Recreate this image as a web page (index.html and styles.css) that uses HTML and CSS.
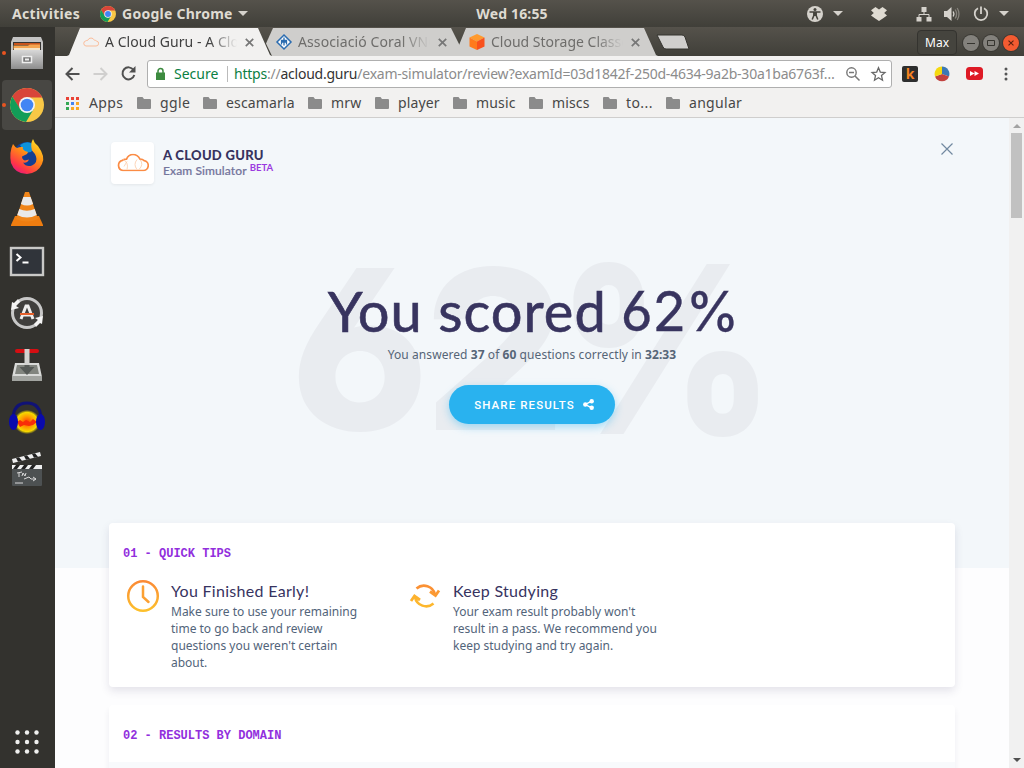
FILE: index.html
```
<!DOCTYPE html>
<html lang="en">
<head>
<meta charset="utf-8">
<title>A Cloud Guru - Exam Simulator</title>
<link rel="stylesheet" href="styles.css">
</head>
<body>
<svg class="defs" width="0" height="0">
  <defs>
    <linearGradient id="amber" x1="0" y1="0" x2="0" y2="1"><stop offset="0" stop-color="#fb8a35"/><stop offset="1" stop-color="#fdc02c"/></linearGradient>
    <linearGradient id="silver" x1="0" y1="0" x2="0" y2="1"><stop offset="0" stop-color="#d8d8d8"/><stop offset="1" stop-color="#8d8d8d"/></linearGradient>
    <linearGradient id="fox" x1="0.8" y1="0" x2="0.2" y2="1"><stop offset="0" stop-color="#ffe226"/><stop offset=".45" stop-color="#ff8a16"/><stop offset=".8" stop-color="#ff3647"/><stop offset="1" stop-color="#e31587"/></linearGradient>
    <radialGradient id="flame"><stop offset="0" stop-color="#ff3b00"/><stop offset=".45" stop-color="#ff9a00"/><stop offset=".8" stop-color="#f5d800"/><stop offset="1" stop-color="#d8c000" stop-opacity=".1"/></radialGradient>
    <symbol id="chrome" viewBox="0 0 34 34">
      <circle cx="17" cy="17" r="17" fill="#f9c846"/>
      <path d="M2.3 8.5A17 17 0 0 1 31.7 8.5L32 9.5H17L9.7 21Z" fill="#d8453a"/>
      <path d="M2.3 8.5A17 17 0 0 0 16 34L24 20.500 17 24.600 10 20.700Z" fill="#129d58"/>
      <circle cx="17" cy="17" r="8" fill="#f3f3f3"/><circle cx="17" cy="17" r="6.300" fill="#4285f4"/>
    </symbol>
    <symbol id="folder" viewBox="0 0 14 12"><path d="M1 0h4.500l1.500 2H13a1 1 0 0 1 1 1v8a1 1 0 0 1-1 1H1a1 1 0 0 1-1-1V1a1 1 0 0 1 1-1z" fill="#8b8b8b"/></symbol>
    <symbol id="cross" viewBox="0 0 8 8"><path d="M.7.7l6.600 6.600M7.300.7L.7 7.300" stroke="currentColor" stroke-width="1.500" fill="none"/></symbol>
    <symbol id="cloud" viewBox="0 0 32 18"><path d="M6 17h20a5 5 0 0 0 1.200-9.900Q25.500 5.500 23 5.600 20.500 1 16 1T9.500 5.600Q7.500 5.500 5.500 6.800A5.200 5.200 0 0 0 6 17z" fill="none" stroke="currentColor" stroke-width="1.700"/></symbol>
  </defs>
</svg>

<header class="topbar">
  <div class="topbar-left"><b class="activities">Activities</b><svg width="16" height="16"><use href="#chrome"/></svg><b class="app-name">Google Chrome</b><i class="caret"></i></div>
  <b class="clock">Wed 16:55</b>
  <div class="topbar-right">
    <svg width="16" height="16" viewBox="0 0 16 16"><circle cx="8" cy="8" r="8" fill="#d5d2cc"/><circle cx="8" cy="3.400" r="1.500" fill="#45433c"/><path d="M2.500 6h11M8 6v4M6.800 6.500v3L5.200 13.500M9.200 6.500v3l1.600 4" stroke="#45433c" stroke-width="1.500" fill="none"/></svg>
    <i class="caret caret-access"></i>
    <svg class="dropbox" width="16" height="14" viewBox="0 0 16 14"><path d="M4.500 0L8 2.500 11.500 0 16 3.200 13.200 6 16 8.600 12.500 11 8 14 3.500 11 0 8.600 2.800 6 0 3.200z" fill="#dfdbd2"/></svg>
    <svg class="network" width="16" height="16" viewBox="0 0 16 16"><path d="M5.500 1h5v5h-5zM.5 11h5v4.500h-5zM10.500 11h5v4.500h-5z" fill="#d5d2cc"/><path d="M8 5v3.500M3 12V8.500h10V12" stroke="#d5d2cc" fill="none"/></svg>
    <svg class="sound" width="16" height="14" viewBox="0 0 16 14"><path d="M0 4h3l4.500-4v14L3 10H0z" fill="#d5d2cc"/><path d="M9.200 4.500q1.500 2.500 0 5" fill="none" stroke="#d5d2cc" stroke-width="1.400"/><path d="M11.200 2.500q2.800 4.500 0 9M13.200 1q3.600 6 0 12" fill="none" stroke="#85827b" stroke-width="1.300"/></svg>
    <svg class="power" width="16" height="16" viewBox="0 0 16 16"><path d="M5 2.200a6.300 6.300 0 1 0 6 0M8 .5V8" fill="none" stroke="#d5d2cc" stroke-width="1.800"/></svg>
    <i class="caret caret-power"></i>
  </div>
</header>

<div class="desktop">
  <nav class="dock">
    <a class="dock-item running"><svg width="34" height="34" viewBox="0 0 34 34"><path d="M3 1h28l2 5v27H1V6z" fill="#c3c3c3"/><path d="M3 6h28v10H3z" fill="#373533"/><path d="M4 7h26v2H4z" fill="#c9551c"/><path d="M3.500 9.500H18l2-1h10v5H3.500z" fill="#f5a550"/><path d="M4 12h26v3H4z" fill="#f5e2c5"/><path d="M1 14h32v19H1z" fill="url(#silver)"/><rect x="12.500" y="20.500" width="9" height="6" fill="#777" stroke="#eee" stroke-width="1.500"/><path d="M15 22.500h4v2h-4z" fill="#eee"/></svg></a>
    <a class="dock-item running active"><svg width="34" height="34"><use href="#chrome"/></svg></a>
    <a class="dock-item"><svg width="34" height="36" viewBox="0 0 34 36"><circle cx="17" cy="17" r="14" fill="#153e91"/><path d="M10 6q8-6 15 1l-4 6-6 1z" fill="#0d93dc"/><path d="M3 5q2 3 4 4 3-1.500 6-1-1 2 2 4l3 1-1 2-5 2.500q0 3 3 4l4-1q-2 4-6 3 3 5 9 3 6-3 4-9-1-3-4-6Q20 5 23 0q1 4 5 7 8 11 4 18-4 9-15 10Q5 35 1 24-1 13 3 5z" fill="url(#fox)"/></svg></a>
    <a class="dock-item"><svg width="32" height="36" viewBox="0 0 32 36"><path d="M4 25h24l4 9v1H0v-1z" fill="#ef7d10"/><path d="M14 1h4l9 27q-11 5-22 0z" fill="#f08519"/><path d="M12.300 6h7.300l2.500 7q-6 3-12.200 0zM8.300 18q7.500 3.500 15.400 0l2 6q-9.700 5-19.500 0z" fill="#e9e9e9"/></svg></a>
    <a class="dock-item"><svg width="34" height="29" viewBox="0 0 34 29"><rect x="1" y="1" width="32" height="27" fill="#30343a" stroke="#c9c9c7" stroke-width="2.400"/><path d="M6.500 7l4 3.500-4 3.500M12.500 15.500h6" fill="none" stroke="#fff" stroke-width="2"/></svg></a>
    <a class="dock-item"><svg width="34" height="34" viewBox="0 0 34 34"><circle cx="17" cy="17" r="14.500" fill="#403f3d" stroke="#c8c8c8" stroke-width="3"/><path d="M11 23l5-13h2l5 13M12 19h10" fill="none" stroke="#eee" stroke-width="3"/><path d="M10 18h14" stroke="#e4602c" stroke-width="2"/><path d="M1 14L2 6l2 1 4-4 2 3-4 4 3 2zM33 20l-1 8-2-1-4 4-2-3 4-4-3-2z" fill="#f4f4f4"/></svg></a>
    <a class="dock-item"><svg width="32" height="34" viewBox="0 0 32 34"><path d="M4 15h24l3 14H1z" fill="#d9dad8"/><path d="M6 17h20l2 9H4z" fill="#82857f"/><path d="M1 28h30v5H1z" fill="#a2a4a0"/><rect x="4" y="1" width="24" height="4" rx="2" fill="#d50e12"/><path d="M13.500 17h5v2h5l-7.500 8-7.500-8h5z" fill="#565a57"/><path d="M13.500 1h5v16h-5z" fill="#d2d2d0"/></svg></a>
    <a class="dock-item"><svg width="36" height="34" viewBox="0 0 36 34"><ellipse cx="18" cy="22" rx="13" ry="12" fill="url(#flame)"/><path d="M8 22l3-2 3 2 3-2 4 2 3-3 4 3-4 3-4 1-5-1-4 2z" fill="#f92d08"/><path d="M4 20Q4 3 18 3T32 20" fill="none" stroke="#101276" stroke-width="3"/><ellipse cx="4.500" cy="22" rx="4.500" ry="8" fill="#0a0aac"/><ellipse cx="31.500" cy="22" rx="4.500" ry="8" fill="#0a0aac"/></svg></a>
    <a class="dock-item"><svg width="32" height="36" viewBox="0 0 32 36"><rect x="1" y="16" width="30" height="19" rx="1" fill="#4d5152"/><path d="M1 14h30v4H1zM1 8L29 1l1 4L2 12z" fill="#eee"/><path d="M5 14h4l-3 4H2zM13 14h4l-3 4h-4zM21 14h4l-3 4h-4zM5 7l3-.8 3 3.500-4 1zM13 5l3-.8 3 3.500-4 1zM21 3l3-.8 3 3.500-4 1z" fill="#222"/><path d="M6 22l5-1M8 22v4M11 25l1-3 2 3 1-3M13 28l5-2 2 2h5M22 26l3 2-3 2M4 32h8" fill="none" stroke="#d9d9d9"/></svg></a>
    <a class="dock-grid"><svg width="24" height="24" viewBox="0 0 24 24" fill="#f0f0ef"><circle cx="2.500" cy="2.500" r="2.200"/><circle cx="12" cy="2.500" r="2.200"/><circle cx="21.500" cy="2.500" r="2.200"/><circle cx="2.500" cy="12" r="2.200"/><circle cx="12" cy="12" r="2.200"/><circle cx="21.500" cy="12" r="2.200"/><circle cx="2.500" cy="21.500" r="2.200"/><circle cx="12" cy="21.500" r="2.200"/><circle cx="21.500" cy="21.500" r="2.200"/></svg></a>
  </nav>

  <main class="browser">
    <div class="tabs">
      <div class="tab tab-active"><svg class="fav fav-cloud" width="16" height="10"><use href="#cloud"/></svg><span class="tab-title t1">A Cloud Guru - A Clou</span><svg class="tab-x" width="9" height="9"><use href="#cross"/></svg></div>
      <div class="tab"><svg class="fav" width="16" height="16" viewBox="0 0 16 16"><path d="M8 1L15 8 8 15 1 8z" fill="#fff" stroke="#2b6cb0" stroke-width="1.500"/><path d="M5.500 10.500V6.500h5v4M8 3.500v8M5 8h6" fill="none" stroke="#2b6cb0" stroke-width="1.300"/></svg><span class="tab-title t2">Associació Coral VNG</span><svg class="tab-x" width="9" height="9"><use href="#cross"/></svg></div>
      <div class="tab"><svg class="fav" width="16" height="16" viewBox="0 0 16 16"><path d="M8 0l7.500 3.500L8 7.500.5 3.500z" fill="#ff9a2e"/><path d="M.5 3.500L8 7.500V16L.5 12.500z" fill="#ff7a1c"/><path d="M15.500 3.500L8 7.500V16l7.500-3.500z" fill="#f9511d"/></svg><span class="tab-title t3">Cloud Storage Classe</span><svg class="tab-x" width="9" height="9"><use href="#cross"/></svg></div>
      <svg class="new-tab" width="34" height="17" viewBox="0 0 34 17"><path d="M1 1h25q2 0 3 2l4 12H10q-2 0-3-2z" fill="#d0cfcd" stroke="#35342f"/></svg>
      <div class="window-controls"><span class="profile">Max</span><i class="wbtn"><svg width="8" height="8" viewBox="0 0 8 8"><path d="M0 4.500h8" stroke="#35342f"/></svg></i><i class="wbtn"><svg width="8" height="8" viewBox="0 0 8 8"><path d="M.5 1.500h7v5h-7z" fill="none" stroke="#35342f"/></svg></i><i class="wbtn wclose"><svg width="6" height="6"><use href="#cross"/></svg></i></div>
    </div>

    <div class="toolbar">
      <svg width="15" height="14" viewBox="0 0 15 14"><path d="M7.500 1l-6 6 6 6M1.500 7H14.500" fill="none" stroke="#505050" stroke-width="2"/></svg>
      <svg width="15" height="14" viewBox="0 0 15 14"><path d="M7.500 1l6 6-6 6M13.500 7H.5" fill="none" stroke="#d0cfce" stroke-width="2"/></svg>
      <svg width="15" height="15" viewBox="0 0 15 15"><path d="M12.500 4A6 6 0 1 0 13.300 9" fill="none" stroke="#505050" stroke-width="2"/><path d="M14.500 0v6.500H8z" fill="#505050"/></svg>
      <div class="omnibox">
        <svg width="9" height="12" viewBox="0 0 9 12"><path d="M2 5V3a2.500 2.500 0 0 1 5 0v2" fill="none" stroke="#3d8b40" stroke-width="1.500"/><path d="M0 4.500h9V12H0z" fill="#3d8b40"/></svg>
        <span class="secure">Secure</span><span class="url"><span class="scheme">https</span>://<span class="host">acloud.guru</span><span class="path">/exam-simulator/review?examId=03d1842f-250d-4634-9a2b-30a1ba6763f…</span></span>
        <svg class="lens" width="14" height="14" viewBox="0 0 14 14"><circle cx="5.500" cy="5.500" r="4.700" fill="none" stroke="#777" stroke-width="1.400"/><path d="M9 9l4.500 4.500M3 5.500h5" stroke="#777" stroke-width="1.500"/></svg>
        <svg class="star" width="15" height="14" viewBox="0 0 15 14"><path d="M7.500.8l1.800 4.300 4.700.4-3.500 3.100 1 4.600-4-2.500-4 2.500 1-4.600L1 5.500l4.700-.4z" fill="none" stroke="#686868" stroke-width="1.300"/></svg>
      </div>
      <span class="ext-k">k</span>
      <svg class="pie" width="16" height="16" viewBox="0 0 16 16"><path d="M8 8V.5a7.500 7.500 0 0 1 7 10z" fill="#3c78b5"/><path d="M8 8l7 2.500a7.500 7.500 0 0 1-14 0z" fill="#c3423f"/><path d="M8 8L1 10.500A7.500 7.500 0 0 1 8 .5z" fill="#f5d90f"/></svg>
      <svg class="yt" width="17" height="13" viewBox="0 0 17 13"><rect width="17" height="13" rx="3.500" fill="#de1a25"/><path d="M4 4l4.500 2.500L4 9zM8.500 4L13 6.500 8.500 9z" fill="#fff"/></svg>
      <svg class="kebab" width="4" height="14" viewBox="0 0 4 14" fill="#555"><circle cx="2" cy="2" r="1.500"/><circle cx="2" cy="7" r="1.500"/><circle cx="2" cy="12" r="1.500"/></svg>
    </div>

    <div class="bookmarks">
      <svg width="14" height="13" viewBox="0 0 14 13"><path d="M0 0h3v3H0zM5 0h3v3H5zM10 0h3v3h-3z" fill="#e94235"/><path d="M0 5h3v3H0z" fill="#34a853"/><path d="M5 5h3v3H5z" fill="#4285f4"/><path d="M10 5h3v3h-3zM5 10h3v3H5zM10 10h3v3h-3z" fill="#f9a825"/><path d="M0 10h3v3H0z" fill="#34a853"/></svg>
      <span class="bm b-apps">Apps</span>
      <svg width="14" height="12"><use href="#folder"/></svg><span class="bm b-ggle">ggle</span>
      <svg width="14" height="12"><use href="#folder"/></svg><span class="bm b-esc">escamarla</span>
      <svg width="14" height="12"><use href="#folder"/></svg><span class="bm b-mrw">mrw</span>
      <svg width="14" height="12"><use href="#folder"/></svg><span class="bm b-player">player</span>
      <svg width="14" height="12"><use href="#folder"/></svg><span class="bm b-music">music</span>
      <svg width="14" height="12"><use href="#folder"/></svg><span class="bm b-miscs">miscs</span>
      <svg width="14" height="12"><use href="#folder"/></svg><span class="bm b-to">to...</span>
      <svg width="14" height="12"><use href="#folder"/></svg><span class="bm b-ang">angular</span>
    </div>

    <div class="viewport">
      <div class="page">
        <section class="hero">
          <div class="brand">
            <div class="logo"><svg width="32" height="19" viewBox="0 0 32 18"><use href="#cloud"/><path d="M6 6q6 3 4 10M10 8l-3 5M20 6q-4 5 0 10M23 6q4 5-1 10" fill="none" stroke="#fbcba8" stroke-width=".8"/></svg></div>
            <div class="brand-text"><b class="brand-name">A CLOUD GURU</b><div class="brand-sub"><span>Exam Simulator</span><em>BETA</em></div></div>
            <svg class="close" width="12" height="12" viewBox="0 0 12 12"><path d="M.5.5l11 11M11.500.5l-11 11" stroke="#7189a0" stroke-width="1.200"/></svg>
          </div>
          <div class="score">
            <div class="ghost"><span class="g6">6</span><span class="g2">2</span><span class="gp">%</span></div>
            <h1><span>You scored</span><span class="num">62%</span></h1>
            <p>You answered <b>37</b> of <b>60</b> questions correctly in <b>32:33</b></p>
            <a class="share"><span>SHARE RESULTS</span><svg width="11" height="11" viewBox="0 0 11 11" fill="#fff"><circle cx="2.300" cy="5.500" r="2.200"/><circle cx="8.700" cy="2.200" r="2.200"/><circle cx="8.700" cy="8.800" r="2.200"/><path d="M8.700 2.200L2.300 5.500l6.400 3.300" fill="none" stroke="#fff" stroke-width="1.400"/></svg></a>
          </div>
        </section>
        <section class="card card-tips">
          <h2>01 - QUICK TIPS</h2>
          <div class="tips">
            <article class="tip"><svg width="32" height="32" viewBox="0 0 32 32" fill="none"><circle cx="16" cy="16" r="14.800" stroke="url(#amber)" stroke-width="2.500"/><path d="M16 6.500V17l5.500 5" stroke="#fca032" stroke-width="2.500" stroke-linecap="round"/></svg>
              <div><h3 class="h-early">You Finished Early!</h3><p>Make sure to use your remaining<br>time to go back and review<br>questions you weren't certain<br>about.</p></div></article>
            <article class="tip tip-study"><svg width="30" height="26" viewBox="0 0 30 26" fill="none"><path d="M6.500 5.500A11.300 11.300 0 0 1 25 11.500" stroke="#fb9133" stroke-width="2.600"/><path d="M20 8.500l5.500 4L29 7.500" stroke="#fb9a32" stroke-width="2.800"/><path d="M23.500 20.500A11.300 11.300 0 0 1 5 14" stroke="#fdb72d" stroke-width="2.600"/><path d="M1 18l3.500-5 5.500 4" stroke="#fdb22e" stroke-width="2.800"/></svg>
              <div><h3 class="h-study">Keep Studying</h3><p>Your exam result probably won't<br>result in a pass. We recommend you<br>keep studying and try again.</p></div></article>
          </div>
        </section>
        <section class="card card-domain"><h2>02 - RESULTS BY DOMAIN</h2><div class="domain-body"></div></section>
      </div>
      <div class="scrollbar"><i class="arrow-up"></i><div class="thumb"></div><i class="arrow-down"></i></div>
    </div>
  </main>
</div>
</body>
</html>
```
FILE: styles.css
```
* { box-sizing: border-box; }
body { margin: 0; width: 1024px; height: 768px; overflow: hidden; display: flex; flex-direction: column; font-family: "Noto Sans", sans-serif; }
svg { flex: none; display: block; overflow: visible; }
.defs { position: absolute; }
h1, h2, h3, p { margin: 0; font-weight: 400; }

.topbar { height: 27px; flex: none; display: grid; grid-template-columns: 1fr auto 1fr; align-items: center; background: linear-gradient(#55524b, #403f39); color: #dfdbd2; font-size: 14px; line-height: 27px; }
.topbar-left, .topbar-right { display: flex; align-items: center; }
.topbar-left { padding-left: 12px; }
.activities { width: 88px; letter-spacing: .3px; }
.app-name { margin-left: 6px; width: 116px; letter-spacing: .25px; white-space: nowrap; }
.caret { border: 5px solid transparent; border-top-color: #d5d2cc; border-bottom: 0; flex: none; }
.clock { letter-spacing: .15px; }
.topbar-right { justify-content: flex-end; padding-right: 15px; }
.caret-access { margin-left: 10px; }
.dropbox { margin-left: 28px; }
.network { margin-left: 29px; }
.sound { margin-left: 12px; }
.power { margin-left: 13px; }
.caret-power { margin-left: 10px; }

.desktop { flex: 1; display: flex; min-height: 0; }
.dock { width: 55px; background: #33322e; display: flex; flex-direction: column; gap: 2px; padding-top: 1px; align-items: center; flex: none; }
.dock-item { width: 50px; height: 50px; border-radius: 4px; display: flex; align-items: center; justify-content: center; margin-right: 1px; position: relative; flex: none; }
.active { background: #484743; }
.running::before { content: ""; position: absolute; left: 0; top: 23px; width: 4px; height: 4px; border-radius: 50%; background: #e95420; }
.dock-grid { margin: auto 2px 14px 0; }

.browser { flex: 1; min-width: 0; display: flex; flex-direction: column; }
.tabs { height: 29px; flex: none; display: flex; align-items: flex-end; padding-left: 12px; background: linear-gradient(#55524b, #403f39); }
.tab { width: 205px; height: 28px; margin-right: -12px; flex: none; display: flex; align-items: center; padding: 0 18px 0 16px; background: #cfcecc; color: #6e6d6b; clip-path: polygon(0 100%, 2px 96%, 13px 0, calc(100% - 14px) 0, calc(100% - 2px) 96%, 100% 100%); font-size: 14px; }
.tab:nth-child(2) { clip-path: polygon(12px 100%, 6px 55%, 13px 0, calc(100% - 14px) 0, 100% 100%); }
.tab-active { background: #f2f1f0; color: #3f3f3f; position: relative; }
.fav-cloud { color: #fbb38b; }
.tab-title { margin-left: 6px; width: 134px; overflow: hidden; white-space: nowrap; line-height: 28px; -webkit-mask-image: linear-gradient(90deg, #000 104px, transparent 132px); mask-image: linear-gradient(90deg, #000 104px, transparent 132px); }
.t1 { letter-spacing: .05px; }
.t2 { letter-spacing: .1px; }
.tab-x { margin-left: auto; color: #777; }
.new-tab { margin: 0 0 5px 10px; }
.window-controls { margin: 0 5px 1px auto; display: flex; align-items: center; gap: 4px; }
.profile { width: 40px; height: 25px; border: 1px solid #34332f; border-radius: 4px; background: #45443e; color: #fff; font-size: 12px; line-height: 24px; text-align: center; margin-right: 2px; }
.wbtn { width: 16px; height: 16px; border-radius: 50%; background: #83817c; box-shadow: 0 0 0 1px #393833; display: flex; align-items: center; justify-content: center; }
.wclose { background: #f35b31; color: #5b2110; }

.toolbar { height: 35px; flex: none; display: flex; align-items: center; padding-left: 10px; gap: 13px; background: #f2f1f0; }
.omnibox { width: 745px; height: 28px; margin-left: -2px; padding-left: 8px; display: flex; align-items: center; background: #fff; border: 1px solid #afafaf; border-radius: 3px; font-size: 14px; line-height: 26px; flex: none; }
.secure { margin-left: 9px; width: 54px; padding-right: 8px; border-right: 1px solid #bbb; line-height: 16px; color: #0b8043; }
.url { margin-left: 6px; width: 604px; color: #8c8c8c; white-space: nowrap; letter-spacing: -.23px; }
.scheme { color: #0b8043; }
.host { color: #333; }
.lens { margin-left: 8px; }
.star { margin-left: 11px; }
.ext-k { width: 16px; height: 16px; margin-left: -3px; background: #2e2e2e; border-radius: 2px; color: #f58220; font-weight: 700; font-size: 14px; line-height: 15px; text-align: center; }
.pie { margin-left: 3px; }
.yt { margin-left: 3px; }
.kebab { margin-left: 8px; }

.bookmarks { height: 27px; flex: none; display: flex; align-items: center; padding: 0 0 3px 11px; background: #f2f1f0; border-bottom: 1px solid #cfcecd; color: #474747; font-size: 14px; line-height: 19px; }
.bookmarks svg { margin-top: 1px; }
.bm { margin-left: 9px; white-space: nowrap; letter-spacing: .15px; }
.b-apps { width: 48px; letter-spacing: .4px; }
.b-ggle { width: 43px; letter-spacing: .4px; }
.b-esc { width: 82px; }
.b-mrw { width: 44px; }
.b-player { width: 55px; }
.b-music { width: 53px; }
.b-miscs { width: 51px; }
.b-to { width: 40px; letter-spacing: .4px; }
.b-ang { letter-spacing: .3px; }

.viewport { flex: 1; display: flex; min-height: 0; }
.page { width: 954px; overflow: hidden; background: #fdfdfe; }
.hero { height: 450px; background: #f3f7fa; padding-top: 24px; }
.brand { height: 42px; display: flex; padding: 0 56px 0 56px; }
.logo { width: 43px; height: 42px; border-radius: 4px; background: #fff; box-shadow: 0 1px 3px #0001; color: #fb8c45; display: flex; align-items: center; justify-content: center; padding-bottom: 2px; }
.brand-text { margin-left: 9px; padding-top: 6px; font-family: Lato, sans-serif; }
.brand-name { display: block; font-size: 13px; line-height: 15px; color: #37335f; font-weight: 900; white-space: nowrap; letter-spacing: .3px; }
.brand-sub { display: flex; font-size: 12px; line-height: 15px; color: #74759c; font-weight: 500; gap: 3px; white-space: nowrap; letter-spacing: .1px; -webkit-text-stroke: .2px #74759c; }
.brand-sub em { font-style: normal; font-size: 9.5px; line-height: 9px; color: #9b3ae0; font-weight: 700; letter-spacing: 0; -webkit-text-stroke: 0; }
.close { margin: 1px 0 0 auto; }
.score { margin-top: 95px; position: relative; display: flex; flex-direction: column; align-items: center; }
.ghost { position: absolute; left: 235px; top: -64px; height: 270px; line-height: 270px; font-family: Inter, sans-serif; font-weight: 800; font-size: 222px; color: #e9ecf0; font-feature-settings: "cv03", "cv04"; white-space: nowrap; }
.ghost span { position: absolute; top: 0; }
.g6 { left: 0; }
.g2 { left: 134px; }
.gp { left: 266px; transform: scale(.96, 1.05); transform-origin: 0 50%; }
h1 { position: relative; display: flex; gap: 14px; height: 58px; line-height: 58px; margin: 3px 0 0 3px; font-family: Lato, sans-serif; font-size: 56px; letter-spacing: 1.05px; color: #38345f; white-space: nowrap; -webkit-text-stroke: .6px #38345f; }
h1 .num { font-family: Inter, sans-serif; font-feature-settings: "cv03", "cv04"; font-size: 55px; letter-spacing: -.4px; -webkit-text-stroke: .4px #38345f; }
.score p { position: relative; margin-top: 6px; font-size: 12px; line-height: 17px; color: #566577; letter-spacing: .07px; }
.share { position: relative; margin-top: 22px; width: 166px; height: 39px; border-radius: 20px; background: #29b2ef; box-shadow: 0 3px 9px #29b2ef66; color: #fff; display: flex; align-items: center; justify-content: center; gap: 8px; padding-left: 4px; font: 500 11.500px Roboto, sans-serif; letter-spacing: 1.100px; white-space: nowrap; }
.card { position: relative; width: 846px; margin-left: 54px; background: #fff; border-radius: 4px; box-shadow: 0 4px 8px #37335f20; }
.card-tips { margin-top: -45px; height: 164px; padding: 23px 14px; }
h2 { font: 700 12px/17px "Liberation Mono", monospace; color: #922fdd; white-space: nowrap; }
.tips { display: flex; padding: 17px 0 0 4px; }
.tip { display: flex; width: 283px; gap: 12px; flex: none; }
.tip-study svg { margin-top: 3px; }
.tip-study { gap: 13px; }
h3 { font: 16px/20px Lato, sans-serif; color: #37335f; margin-top: 1px; white-space: nowrap; letter-spacing: .3px; }
.tip p { font-size: 12px; line-height: 17px; margin-top: 2px; color: #52647a; white-space: nowrap; }
.card-domain { margin-top: 18px; height: 120px; padding-top: 23px; box-shadow: 0 5px 6px #37335f14; }
.card-domain h2 { padding-left: 14px; }
.domain-body { height: 80px; margin-top: 17px; background: #f8fafc; }
.scrollbar { width: 15px; background: #f1f1f1; display: flex; flex-direction: column; align-items: center; }
.arrow-up { margin-top: 6px; border: 4px solid transparent; border-bottom-color: #a3a3a3; border-top: 0; }
.thumb { margin-top: 5px; width: 11px; height: 85px; background: #c1c1c1; }
.arrow-down { margin-top: auto; margin-bottom: 6px; border: 4px solid transparent; border-top-color: #505050; border-bottom: 0; }
```
